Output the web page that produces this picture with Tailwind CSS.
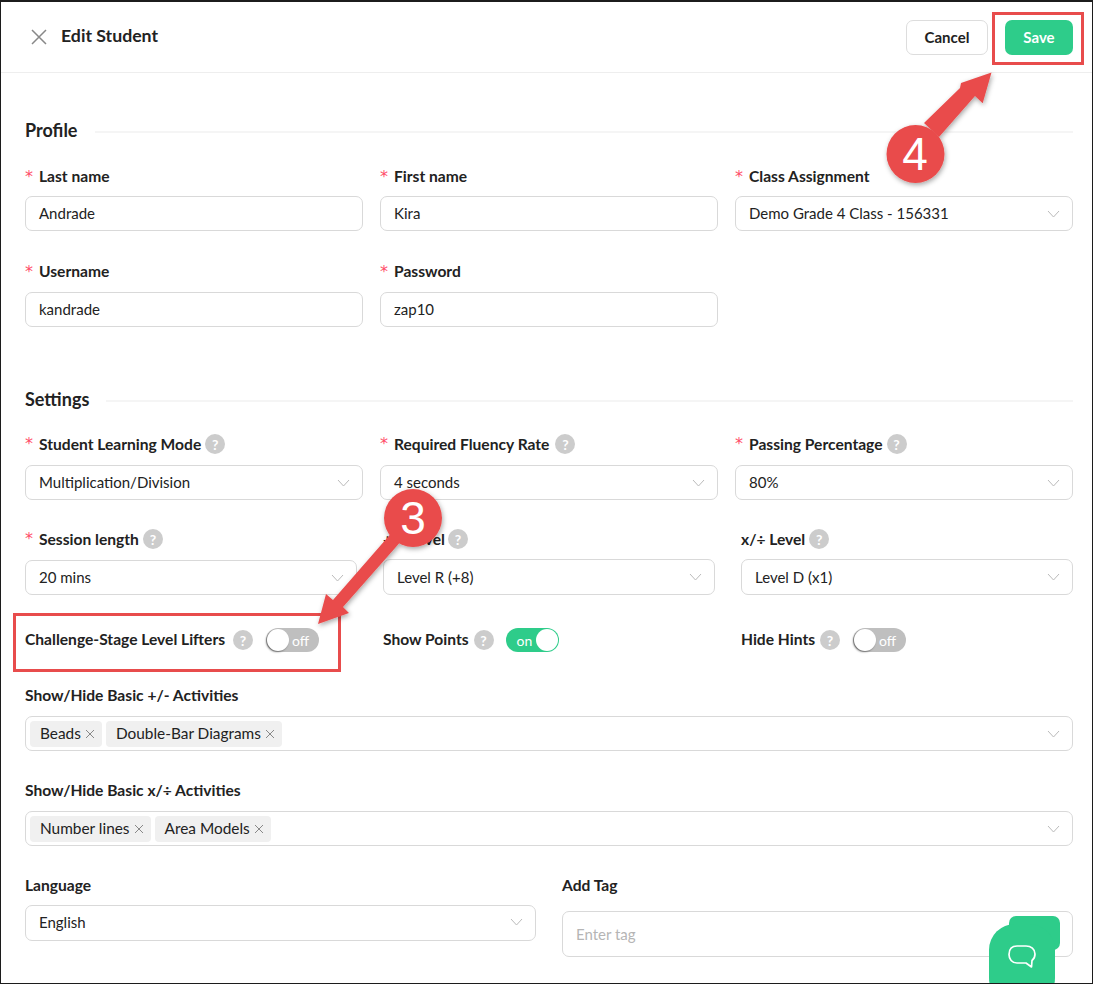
<!DOCTYPE html>
<html lang="en">
<head>
<meta charset="UTF-8">
<title>Edit Student</title>
<script src="https://cdn.jsdelivr.net/npm/@tailwindcss/browser@4"></script>
</head>
<body class="bg-white">
<div class="relative w-[1093px] h-[984px] overflow-hidden border border-t-2 border-[#1c1c1c] bg-white font-['Lato',sans-serif] text-[#222] text-[15px]">

  <!-- header -->
  <header class="flex items-center justify-between h-[71px] border-b border-[#eeeeee] pl-[30px] pr-[19px]">
    <div class="flex items-center gap-[14px]">
      <svg width="16" height="16" viewBox="0 0 16 16" class="text-[#888]"><path d="M1 1L15 15M15 1L1 15" stroke="currentColor" stroke-width="1.5" fill="none"/></svg>
      <h1 class="text-[17.7px] font-bold text-[#222] -mt-[2px]">Edit Student</h1>
    </div>
    <div class="flex items-center gap-[17px]">
      <button class="w-[82px] h-[35px] rounded-[7px] border border-[#dddddd] bg-white text-[15px] font-bold">Cancel</button>
      <button class="w-[68px] h-[35px] rounded-[7px] bg-[#2ecc8a] text-white text-[15px] font-bold">Save</button>
    </div>
  </header>

  <main class="pl-[24px] pr-[19px]">
    <!-- Profile -->
    <div class="flex items-center gap-[18px] h-[24px] mt-[45px]">
      <h2 class="text-[18px] font-bold">Profile</h2>
      <div class="flex-1 h-[2px] bg-[#f5f5f5] mt-[3px]"></div>
    </div>
    <div class="grid grid-cols-3 gap-x-[17px] mt-[24px]">
      <div>
        <label class="flex items-center h-[20px] pt-[1px] font-bold text-[15.6px]"><span class="w-[14px] text-[#ff4d6a] font-['DejaVu_Sans'] font-normal text-[16px]">*</span>Last name</label>
        <div class="flex items-center h-[35px] mt-[10px] px-[13px] border border-[#d9d9d9] rounded-[7px]">Andrade</div>
      </div>
      <div>
        <label class="flex items-center h-[20px] pt-[1px] font-bold text-[15.6px]"><span class="w-[14px] text-[#ff4d6a] font-['DejaVu_Sans'] font-normal text-[16px]">*</span>First name</label>
        <div class="flex items-center h-[35px] mt-[10px] px-[13px] border border-[#d9d9d9] rounded-[7px]">Kira</div>
      </div>
      <div>
        <label class="flex items-center h-[20px] pt-[1px] font-bold text-[15.6px]"><span class="w-[14px] text-[#ff4d6a] font-['DejaVu_Sans'] font-normal text-[16px]">*</span>Class Assignment</label>
        <div class="flex items-center justify-between h-[35px] mt-[10px] pl-[13px] pr-[12px] border border-[#d9d9d9] rounded-[7px]">Demo Grade 4 Class - 156331
          <svg width="13" height="8" viewBox="0 0 13 8"><path d="M1 1L6.5 7L12 1" stroke="#bbbbbb" fill="none"/></svg>
        </div>
      </div>
      <div class="mt-[30px]">
        <label class="flex items-center h-[20px] pt-[1px] font-bold text-[15.6px]"><span class="w-[14px] text-[#ff4d6a] font-['DejaVu_Sans'] font-normal text-[16px]">*</span>Username</label>
        <div class="flex items-center h-[35px] mt-[11px] px-[13px] border border-[#d9d9d9] rounded-[7px]">kandrade</div>
      </div>
      <div class="mt-[30px]">
        <label class="flex items-center h-[20px] pt-[1px] font-bold text-[15.6px]"><span class="w-[14px] text-[#ff4d6a] font-['DejaVu_Sans'] font-normal text-[16px]">*</span>Password</label>
        <div class="flex items-center h-[35px] mt-[11px] px-[13px] border border-[#d9d9d9] rounded-[7px]">zap10</div>
      </div>
    </div>

    <!-- Settings -->
    <div class="flex items-center gap-[17px] h-[24px] mt-[60px]">
      <h2 class="text-[18px] font-bold">Settings</h2>
      <div class="flex-1 h-[2px] bg-[#f5f5f5] mt-[3px]"></div>
    </div>
    <div class="grid grid-cols-3 gap-x-[17px] mt-[23px]">
      <div>
        <label class="flex items-center h-[20px] font-bold text-[15.6px]"><span class="w-[14px] text-[#ff4d6a] font-['DejaVu_Sans'] font-normal text-[16px]">*</span><span class="pt-[2px]">Student Learning Mode</span><span class="flex items-center justify-center w-[20px] h-[20px] ml-[4px] rounded-full bg-[#cccccc] text-white text-[14px]">?</span></label>
        <div class="flex items-center justify-between h-[35px] mt-[11px] pl-[13px] pr-[12px] border border-[#d9d9d9] rounded-[7px]">Multiplication/Division
          <svg width="13" height="8" viewBox="0 0 13 8"><path d="M1 1L6.5 7L12 1" stroke="#bbbbbb" fill="none"/></svg>
        </div>
      </div>
      <div>
        <label class="flex items-center h-[20px] font-bold text-[15.6px]"><span class="w-[14px] text-[#ff4d6a] font-['DejaVu_Sans'] font-normal text-[16px]">*</span><span class="pt-[2px]">Required Fluency Rate</span><span class="flex items-center justify-center w-[20px] h-[20px] ml-[6px] rounded-full bg-[#cccccc] text-white text-[14px]">?</span></label>
        <div class="flex items-center justify-between h-[35px] mt-[11px] pl-[13px] pr-[12px] border border-[#d9d9d9] rounded-[7px]">4 seconds
          <svg width="13" height="8" viewBox="0 0 13 8"><path d="M1 1L6.5 7L12 1" stroke="#bbbbbb" fill="none"/></svg>
        </div>
      </div>
      <div>
        <label class="flex items-center h-[20px] font-bold text-[15.6px]"><span class="w-[14px] text-[#ff4d6a] font-['DejaVu_Sans'] font-normal text-[16px]">*</span><span class="pt-[2px]">Passing Percentage</span><span class="flex items-center justify-center w-[20px] h-[20px] ml-[4px] rounded-full bg-[#cccccc] text-white text-[14px]">?</span></label>
        <div class="flex items-center justify-between h-[35px] mt-[11px] pl-[13px] pr-[12px] border border-[#d9d9d9] rounded-[7px]">80%
          <svg width="13" height="8" viewBox="0 0 13 8"><path d="M1 1L6.5 7L12 1" stroke="#bbbbbb" fill="none"/></svg>
        </div>
      </div>
    </div>

    <div class="grid grid-cols-3 gap-x-[26px] mt-[29px]">
      <div>
        <label class="flex items-center h-[20px] font-bold text-[15.6px]"><span class="w-[14px] text-[#ff4d6a] font-['DejaVu_Sans'] font-normal text-[16px]">*</span><span class="pt-[2px]">Session length</span><span class="flex items-center justify-center w-[20px] h-[20px] ml-[4px] rounded-full bg-[#cccccc] text-white text-[14px]">?</span></label>
        <div class="flex items-center justify-between h-[35px] mt-[11px] pl-[13px] pr-[12px] border border-[#d9d9d9] rounded-[7px]">20 mins
          <svg width="13" height="8" viewBox="0 0 13 8"><path d="M1 1L6.5 7L12 1" stroke="#bbbbbb" fill="none"/></svg>
        </div>
      </div>
      <div>
        <label class="flex items-center h-[20px] font-bold text-[15.6px]"><span class="pt-[2px]">+/- Level</span><span class="flex items-center justify-center w-[20px] h-[20px] ml-[3px] rounded-full bg-[#cccccc] text-white text-[14px]">?</span></label>
        <div class="flex items-center justify-between h-[36px] mt-[10px] pl-[13px] pr-[12px] border border-[#d9d9d9] rounded-[7px]">Level R (+8)
          <svg width="13" height="8" viewBox="0 0 13 8"><path d="M1 1L6.5 7L12 1" stroke="#bbbbbb" fill="none"/></svg>
        </div>
      </div>
      <div>
        <label class="flex items-center h-[20px] font-bold text-[15.6px]"><span class="pt-[2px]">x/÷ Level</span><span class="flex items-center justify-center w-[20px] h-[20px] ml-[4px] rounded-full bg-[#cccccc] text-white text-[14px]">?</span></label>
        <div class="flex items-center justify-between h-[36px] mt-[10px] pl-[13px] pr-[12px] border border-[#d9d9d9] rounded-[7px]">Level D (x1)
          <svg width="13" height="8" viewBox="0 0 13 8"><path d="M1 1L6.5 7L12 1" stroke="#bbbbbb" fill="none"/></svg>
        </div>
      </div>
    </div>

    <!-- toggles -->
    <div class="grid grid-cols-3 gap-x-[26px] mt-[33px]">
      <div class="flex items-center h-[24px] font-bold text-[15.6px]"><span>Challenge-Stage Level Lifters</span>
        <span class="flex items-center justify-center w-[20px] h-[20px] ml-[8px] rounded-full bg-[#cccccc] text-white text-[14px]">?</span>
        <span class="relative flex items-center justify-end w-[53px] h-[24px] ml-[13px] pr-[10px] rounded-full bg-[#bfbfbf] text-white text-[14px] font-normal">off<span class="absolute left-[1px] top-[1px] w-[22px] h-[22px] rounded-full bg-white shadow-[-1px_1px_2px_rgba(0,0,0,0.45)]"></span></span>
      </div>
      <div class="flex items-center h-[24px] font-bold text-[15.6px]"><span>Show Points</span>
        <span class="flex items-center justify-center w-[20px] h-[20px] ml-[5px] rounded-full bg-[#cccccc] text-white text-[14px]">?</span>
        <span class="relative flex items-center w-[53px] h-[24px] ml-[12px] pl-[11px] rounded-full bg-[#2ecc8a] text-white text-[14px] font-normal">on<span class="absolute right-[1px] top-[1px] w-[22px] h-[22px] rounded-full bg-white"></span></span>
      </div>
      <div class="flex items-center h-[24px] font-bold text-[15.6px]"><span>Hide Hints</span>
        <span class="flex items-center justify-center w-[20px] h-[20px] ml-[5px] rounded-full bg-[#cccccc] text-white text-[14px]">?</span>
        <span class="relative flex items-center justify-end w-[53px] h-[24px] ml-[13px] pr-[10px] rounded-full bg-[#bfbfbf] text-white text-[14px] font-normal">off<span class="absolute left-[1px] top-[1px] w-[22px] h-[22px] rounded-full bg-white shadow-[-1px_1px_2px_rgba(0,0,0,0.45)]"></span></span>
      </div>
    </div>

    <!-- multi selects -->
    <label class="flex items-center h-[20px] pt-[2px] mt-[33px] font-bold text-[15.6px]">Show/Hide Basic +/- Activities</label>
    <div class="flex items-center gap-[4px] h-[35px] mt-[11px] pl-[4px] pr-[12px] pt-[1px] border border-[#d9d9d9] rounded-[7px] text-[15.4px]">
      <span class="flex items-center gap-[4px] h-[26px] pl-[10px] pr-[7px] rounded-[4px] bg-[#f0f0f0]">Beads <svg width="10" height="10" viewBox="0 0 10 10"><path d="M1 1L9 9M9 1L1 9" stroke="#888" fill="none"/></svg></span>
      <span class="flex items-center gap-[4px] h-[26px] pl-[10px] pr-[7px] rounded-[4px] bg-[#f0f0f0]">Double-Bar Diagrams <svg width="10" height="10" viewBox="0 0 10 10"><path d="M1 1L9 9M9 1L1 9" stroke="#888" fill="none"/></svg></span>
      <svg width="13" height="8" viewBox="0 0 13 8" class="ml-auto"><path d="M1 1L6.5 7L12 1" stroke="#bbbbbb" fill="none"/></svg>
    </div>
    <label class="flex items-center h-[20px] pt-[2px] mt-[29px] font-bold text-[15.6px]">Show/Hide Basic x/÷ Activities</label>
    <div class="flex items-center gap-[4px] h-[35px] mt-[11px] pl-[4px] pr-[12px] border border-[#d9d9d9] rounded-[7px] text-[15.4px]">
      <span class="flex items-center gap-[4px] h-[26px] pl-[10px] pr-[7px] rounded-[4px] bg-[#f0f0f0]">Number lines <svg width="10" height="10" viewBox="0 0 10 10"><path d="M1 1L9 9M9 1L1 9" stroke="#888" fill="none"/></svg></span>
      <span class="flex items-center gap-[4px] h-[26px] pl-[10px] pr-[7px] rounded-[4px] bg-[#f0f0f0]">Area Models <svg width="10" height="10" viewBox="0 0 10 10"><path d="M1 1L9 9M9 1L1 9" stroke="#888" fill="none"/></svg></span>
      <svg width="13" height="8" viewBox="0 0 13 8" class="ml-auto"><path d="M1 1L6.5 7L12 1" stroke="#bbbbbb" fill="none"/></svg>
    </div>

    <div class="grid grid-cols-2 gap-x-[26px] mt-[29px]">
      <div>
        <label class="flex items-center h-[20px] pt-[1px] font-bold text-[15.6px]">Language</label>
        <div class="flex items-center justify-between h-[36px] mt-[10px] pl-[13px] pr-[12px] pb-[2px] border border-[#d9d9d9] rounded-[7px]">English
          <svg width="13" height="8" viewBox="0 0 13 8"><path d="M1 1L6.5 7L12 1" stroke="#bbbbbb" fill="none"/></svg>
        </div>
      </div>
      <div>
        <label class="flex items-center h-[20px] pt-[1px] font-bold text-[15.6px]">Add Tag</label>
        <div class="flex items-center h-[46px] mt-[16px] px-[13px] border border-[#d9d9d9] rounded-[7px] text-[#b5b5b5]">Enter tag</div>
      </div>
    </div>
  </main>

  <!-- chat widget -->
  <div class="absolute left-[1008px] top-[914px] w-[51px] h-[34px] rounded-[7px] bg-[#2ecc8a]"></div>
  <div class="absolute left-[988px] top-[922px] flex justify-center pt-[20px] w-[66px] h-[80px] rounded-[26px] bg-[#2ecc8a]">
    <svg width="30" height="28" viewBox="0 0 30 28"><path d="M10 2H19C24 2 28 5 28 10C28 13 27 15 25 16.500L24.500 23L19 19H10C5 19 2 15 2 10.500C2 5 5 2 10 2Z" stroke="#fff" stroke-width="1.700" fill="none" stroke-linejoin="round"/></svg>
  </div>

  <!-- annotations -->
  <svg class="absolute -left-px -top-[2px] pointer-events-none" width="1093" height="984" viewBox="0 0 1093 984">
    <defs><filter id="sh" x="-20%" y="-20%" width="140%" height="140%"><feDropShadow dx="1" dy="2" stdDeviation="2.500" flood-color="#000" flood-opacity="0.35"/></filter></defs>
    <rect x="993.500" y="13.500" width="89" height="50" fill="none" stroke="#e84c4c" stroke-width="3"/>
    <rect x="14.500" y="614.500" width="325" height="56" fill="none" stroke="#e84c4c" stroke-width="3"/>
    <g filter="url(#sh)" fill="#e94b4b">
      <path d="M991.500 72.500L982.700 103.300L975 96L939 137L924 123L960 88L961 83Z"/>
      <circle cx="915.500" cy="154" r="29"/>
      <path d="M318 624L326 594L333 600L408 514L418 522L343 607L349 613Z"/>
      <circle cx="413" cy="518" r="29"/>
    </g>
    <text x="915" y="170" text-anchor="middle" fill="#fff" font-family="Liberation Sans" font-size="46">4</text>
    <text x="413" y="534" text-anchor="middle" fill="#fff" font-family="Liberation Sans" font-size="46">3</text>
  </svg>
</div>
</body>
</html>
